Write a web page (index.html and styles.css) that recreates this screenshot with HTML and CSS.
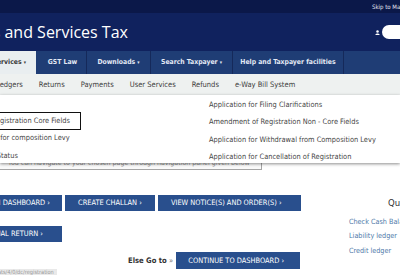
FILE: index.html
```html
<!DOCTYPE html>
<html lang="en">
<head>
<meta charset="utf-8">
<title>Goods and Services Tax</title>
<link rel="stylesheet" href="styles.css">
</head>
<body>
<div class="skip">Skip to Main Content</div>
<header class="brand">
  <h1 class="title">Goods and Services Tax</h1>
  <div class="user">
    <svg class="user-icon" viewBox="0 0 6 6" width="5" height="5"><circle cx="3" cy="1.8" r="1.5" fill="#fff"/><path d="M0.4 6 C0.6 3.6 5.4 3.6 5.6 6 Z" fill="#fff"/></svg>
    <span class="user-name"></span>
  </div>
</header>
<nav class="nav">
  <a class="nav-item active">Services <span class="caret">&#9662;</span></a>
  <a class="nav-item w-law">GST Law</a>
  <a class="nav-item w-dl">Downloads <span class="caret">&#9662;</span></a>
  <a class="nav-item w-search">Search Taxpayer <span class="caret">&#9662;</span></a>
  <a class="nav-item w-help">Help and Taxpayer facilities</a>
</nav>
<nav class="subnav">
  <a class="sub-item first">Ledgers</a>
  <a class="sub-item">Returns</a>
  <a class="sub-item">Payments</a>
  <a class="sub-item">User Services</a>
  <a class="sub-item">Refunds</a>
  <a class="sub-item">e-Way Bill System</a>
</nav>
<div class="stage">
  <div class="dropdown">
    <ul class="dd-col dd-left">
      <li class="dd-item">New Registration</li>
      <li class="dd-item boxed">Amendment of Registration Core Fields</li>
      <li class="dd-item">Application to Opt for composition Levy</li>
      <li class="dd-item">Track Application Status</li>
    </ul>
    <ul class="dd-col dd-right">
      <li class="dd-item">Application for Filing Clarifications</li>
      <li class="dd-item">Amendment of Registration Non - Core Fields</li>
      <li class="dd-item">Application for Withdrawal from Composition Levy</li>
      <li class="dd-item">Application for Cancellation of Registration</li>
    </ul>
  </div>
  <main class="content">
    <div class="alert"><p>You can navigate to your chosen page through navigation panel given below</p></div>
    <div class="cols">
      <section class="main">
        <div class="btn-row">
          <a class="btn first">RETURN DASHBOARD &#8250;</a>
          <a class="btn">CREATE CHALLAN &#8250;</a>
          <a class="btn">VIEW NOTICE(S) AND ORDER(S) &#8250;</a>
        </div>
        <div class="btn-row">
          <a class="btn first annual">ANNUAL RETURN &#8250;</a>
        </div>
        <div class="else-row">
          <span class="else">Else Go to <span class="raquo">&raquo;</span></span>
          <a class="btn">CONTINUE TO DASHBOARD &#8250;</a>
        </div>
        <div class="tag">services/stats/4/0/dc/registration</div>
      </section>
      <aside class="quick">
        <h3 class="quick-title">Quick Links</h3>
        <a class="quick-link">Check Cash Balance</a>
        <a class="quick-link">Liability ledger</a>
        <a class="quick-link">Credit ledger</a>
      </aside>
    </div>
  </main>
</div>
</body>
</html>
```
FILE: styles.css
```css
* { box-sizing: border-box; margin: 0; padding: 0; }
html, body { width: 400px; height: 275px; overflow: hidden; background: #fff; }
body { font-family: "DejaVu Sans Condensed", "DejaVu Sans", sans-serif; color: #333; }
a { text-decoration: none; }
ul { list-style: none; }

.skip { height: 13px; background: #0b1849; color: #e4e8f2; font-size: 6px; line-height: 13px; padding-left: 372px; white-space: nowrap; overflow: hidden; }

.brand { height: 38px; background: #10225e; display: flex; align-items: center; justify-content: space-between; overflow: hidden; }
.title { font-family: "Open Sans", sans-serif; font-weight: 400; font-size: 16px; color: #fff; margin-left: -48px; white-space: nowrap; }
.user { display: flex; align-items: center; gap: 2px; margin-right: -12px; }
.user-icon { display: block; }
.user-name { width: 30px; height: 14px; background: #fff; border-radius: 7px; }

.nav { height: 23px; background: #1f3d75; display: flex; white-space: nowrap; overflow: hidden; }
.nav-item { display: block; flex: none; text-align: center; line-height: 23px; font-size: 6.8px; font-weight: bold; color: #e3e9f4; border-right: 1px solid #15295a; }
.nav-item.active { background: #e9eef0; color: #3a3a3a; width: 56px; margin-left: -20px; text-align: right; padding-right: 10px; border-right: 0; }
.w-law { width: 51px; padding-left: 3px; }
.w-dl { width: 64px; }
.w-search { width: 82px; }
.w-help { width: 111px; }
.caret { font-size: 5px; }

.subnav { height: 21px; background: #eef1f0; display: flex; white-space: nowrap; overflow: hidden; }
.sub-item { display: block; padding: 0 8px; line-height: 21px; font-size: 7.5px; color: #3d3d3d; }
.sub-item.first { margin-left: -12px; }

.stage { position: relative; }
.dropdown { position: absolute; top: 0; left: 0; width: 400px; height: 68px; background: #fff; box-shadow: 0 1px 3px rgba(0,0,0,0.45); display: flex; z-index: 2; padding-top: 1px; }
.dd-col { display: flex; flex-direction: column; }
.dd-left { width: 271px; flex: none; margin-left: -62px; }
.dd-item { height: 17.3px; line-height: 17.3px; font-size: 7.4px; color: #454545; white-space: nowrap; }
.dd-item.boxed { border: 1.5px solid #111; width: 154px; line-height: 16px; height: 19px; margin: -1px 0 0 -11px; padding-left: 12px; }
.dd-item.boxed + .dd-item { margin-top: -1px; }

.content { padding-top: 50px; }
.alert { width: 272px; margin-left: -10px; height: 25px; border: 1px solid #a5a5a5; border-top: 0; background: #fafafa; display: flex; align-items: flex-end; padding: 0 0 1px 17px; }
.alert p { font-size: 7px; line-height: 9px; color: #8c8c8c; white-space: nowrap; }

.cols { display: flex; }
.main { width: 349px; flex: none; padding-top: 25px; }
.btn-row { display: flex; gap: 2px; height: 16px; margin-bottom: 15px; }
.btn { display: block; flex: none; background: #294f8d; color: #fff; font-size: 7.4px; line-height: 16px; height: 16px; padding: 0 13px; white-space: nowrap; }
.btn + .btn { margin-left: 1px; }
.btn-row .btn:nth-child(3) { width: 143px; }
.btn.first { width: 120px; margin-left: -58px; text-align: right; padding-right: 12px; }
.btn.first.annual { padding-right: 19px; }
.else-row { display: flex; align-items: center; gap: 3px; padding-left: 128px; height: 17px; margin-top: -5px; }
.else { font-size: 7.6px; font-weight: bold; color: #333; white-space: nowrap; }
.raquo { font-weight: normal; color: #777; }
.else-row .btn { height: 17px; line-height: 17px; width: 124px; padding: 0 0 0 12px; }
.tag { display: inline-block; margin-left: -32px; background: #e9e9e9; color: #9a9a9a; font-size: 5.6px; padding: 0 3px; line-height: 7px; white-space: nowrap; vertical-align: top; }

.quick { padding-top: 27px; white-space: nowrap; }
.quick-title { font-size: 9.5px; font-weight: normal; color: #333; padding-left: 39px; line-height: 12px; margin-bottom: 6px; }
.quick-link { display: block; font-size: 7.2px; color: #4d78a8; line-height: 14.3px; }
```
